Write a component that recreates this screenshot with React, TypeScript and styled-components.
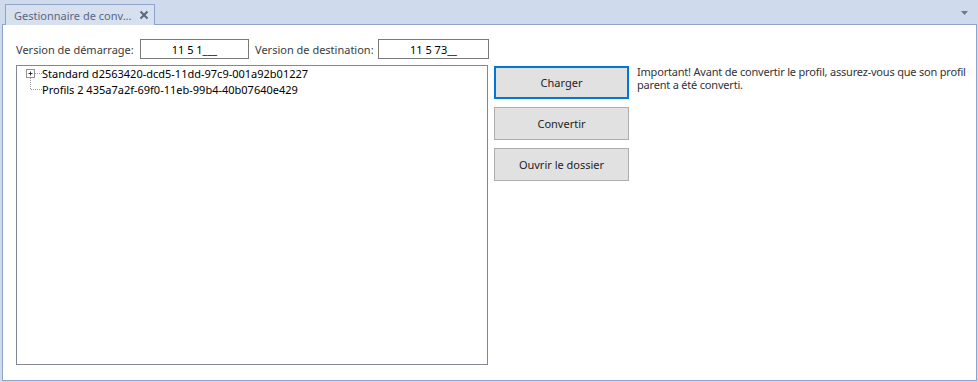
import React from "react";
import styled, { createGlobalStyle } from "styled-components";

const Global = createGlobalStyle`
  html, body { margin: 0; padding: 0; }
  body {
    background: #cfdbed;
    font-family: "Noto Sans", "Open Sans", sans-serif;
    font-size: 11px;
    color: #1e1e1e;
  }
`;

const Window = styled.div`
  width: 978px;
  height: 382px;
  display: flex;
  flex-direction: column;
  background: #cfdbed;
  box-sizing: border-box;
`;

const TabStrip = styled.div`
  height: 24px;
  display: flex;
  align-items: flex-end;
  padding-left: 5px;
  padding-right: 9px;
`;

const Tab = styled.div`
  height: 21px;
  width: 150px;
  box-sizing: border-box;
  border: 1px solid #8ea4c8;
  border-bottom: none;
  background: #d6e0ef;
  display: flex;
  align-items: center;
  padding-left: 8px;
  padding-right: 5px;
  color: #5a6783;
  margin-bottom: -1px;
  position: relative;
  z-index: 1;
`;

const TabTitle = styled.span`
  flex: 1;
  white-space: nowrap;
`;

const Close = styled.span`
  display: flex;
  width: 10px;
  height: 10px;
`;

const MenuArrow = styled.div`
  margin-left: auto;
  align-self: center;
  margin-top: 2px;
  display: flex;
`;

const Panel = styled.div`
  flex: 1;
  margin: 0 1px 1px 2px;
  border: 1px solid #8ea4c8;
  background: #ffffff;
  padding: 14px 0 0 13px;
  display: flex;
  flex-direction: column;
  box-sizing: border-box;
`;

const VersionRow = styled.div`
  display: flex;
  align-items: center;
  height: 20px;
`;

const Label = styled.div<{ $w: number }>`
  width: ${(p) => p.$w}px;
  color: #3b3b3b;
  white-space: nowrap;
`;

const VersionInput = styled.div<{ $w: number }>`
  width: ${(p) => p.$w}px;
  height: 20px;
  box-sizing: border-box;
  border: 1px solid #7a7a7a;
  display: flex;
  align-items: center;
  justify-content: center;
  color: #000;
  margin-right: 6px;
`;

const MainRow = styled.div`
  display: flex;
  margin-top: 6px;
  align-items: flex-start;
`;

const TreeBox = styled.div`
  width: 472px;
  height: 300px;
  box-sizing: border-box;
  border: 1px solid #828790;
  padding: 0;
  position: relative;
`;

const TreeLines = styled.svg`
  position: absolute;
  left: 0;
  top: 0;
`;

const TreeItem = styled.div`
  height: 16px;
  line-height: 16px;
  padding-left: 25px;
  color: #000;
  white-space: nowrap;
`;

const ButtonCol = styled.div`
  display: flex;
  flex-direction: column;
  gap: 8px;
  margin-left: 6px;
  margin-top: 1px;
`;

const Button = styled.div<{ $focused?: boolean }>`
  width: 135px;
  height: 33px;
  box-sizing: border-box;
  background: #e1e1e1;
  border: ${(p) => (p.$focused ? "2px solid #0078d7" : "1px solid #adadad")};
  display: flex;
  align-items: center;
  justify-content: center;
  color: #1e1e1e;
  padding-bottom: 1px;
`;

const Note = styled.div`
  margin-left: 8px;
  margin-top: 0;
  width: 334px;
  line-height: 13px;
  letter-spacing: -0.2px;
  color: #333;
`;

export default function App() {
  return (
    <>
      <Global />
      <Window>
        <TabStrip>
          <Tab>
            <TabTitle>Gestionnaire de conv...</TabTitle>
            <Close>
              <svg width="10" height="10" viewBox="0 0 10 10">
                <path d="M1.5 1.5 L8.5 8.5 M8.5 1.5 L1.5 8.5" stroke="#5a6783" strokeWidth="2" />
              </svg>
            </Close>
          </Tab>
          <MenuArrow>
            <svg width="8" height="5" viewBox="0 0 8 5">
              <path d="M0 0 H7 L3.5 4 Z" fill="#6a7795" />
            </svg>
          </MenuArrow>
        </TabStrip>
        <Panel>
          <VersionRow>
            <Label $w={124}>Version de démarrage:</Label>
            <VersionInput $w={109}>11 5 1___</VersionInput>
            <Label $w={123}>Version de destination:</Label>
            <VersionInput $w={111}>11 5 73__</VersionInput>
          </VersionRow>
          <MainRow>
            <TreeBox>
              <TreeLines width="30" height="40" viewBox="0 0 30 40">
                <rect x="9.5" y="3.5" width="8" height="8" fill="#fff" stroke="#919191" />
                <path d="M11.5 7.5 H15.5 M13.5 5.5 V9.5" stroke="#333" />
                <path d="M18 7.5 H25" stroke="#a0a0a0" strokeDasharray="1 1" />
                <path d="M13.5 12 V23.5 H25" stroke="#a0a0a0" strokeDasharray="1 1" fill="none" />
              </TreeLines>
              <TreeItem>Standard d2563420-dcd5-11dd-97c9-001a92b01227</TreeItem>
              <TreeItem>Profils 2 435a7a2f-69f0-11eb-99b4-40b07640e429</TreeItem>
            </TreeBox>
            <ButtonCol>
              <Button $focused>Charger</Button>
              <Button>Convertir</Button>
              <Button>Ouvrir le dossier</Button>
            </ButtonCol>
            <Note>
              Important! Avant de convertir le profil, assurez-vous que son profil parent a été converti.
            </Note>
          </MainRow>
        </Panel>
      </Window>
    </>
  );
}
